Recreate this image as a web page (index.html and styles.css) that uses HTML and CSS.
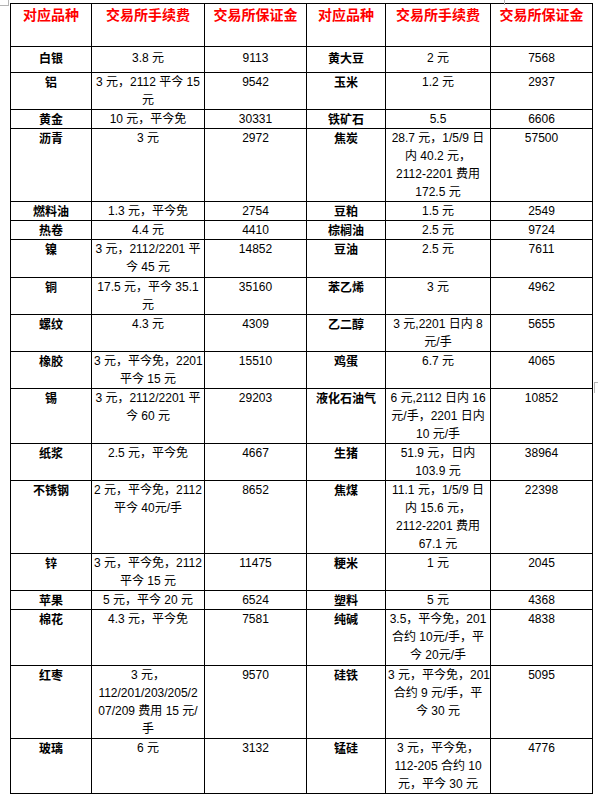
FILE: index.html
```html
<!DOCTYPE html>
<html lang="zh">
<head>
<meta charset="utf-8">
<title>交易所手续费与保证金</title>
<link rel="stylesheet" href="styles.css">
</head>
<body>
<div class="mark mark-tl"></div>
<div class="mark mark-top"></div>
<div class="mark mark-right"></div>
<table class="fees">
<colgroup>
<col class="c-name"><col class="c-fee"><col class="c-margin">
<col class="c-name2"><col class="c-fee2"><col class="c-margin2">
</colgroup>
<thead>
<tr class="head">
<th>对应品种</th><th>交易所手续费</th><th>交易所保证金</th>
<th>对应品种</th><th>交易所手续费</th><th>交易所保证金</th>
</tr>
</thead>
<tbody>
<tr class="r-first">
<td class="name">白银</td><td>3.8 元</td><td>9113</td>
<td class="name">黄大豆</td><td>2 元</td><td>7568</td>
</tr>
<tr>
<td class="name">铝</td><td>3 元，2112 平今 15<br>元</td><td>9542</td>
<td class="name">玉米</td><td>1.2 元</td><td>2937</td>
</tr>
<tr>
<td class="name">黄金</td><td>10 元，平今免</td><td>30331</td>
<td class="name">铁矿石</td><td>5.5</td><td>6606</td>
</tr>
<tr>
<td class="name">沥青</td><td>3 元</td><td>2972</td>
<td class="name">焦炭</td><td>28.7 元，1/5/9 日<br>内 40.2 元，<br>2112-2201 费用<br>172.5 元</td><td>57500</td>
</tr>
<tr>
<td class="name">燃料油</td><td>1.3 元，平今免</td><td>2754</td>
<td class="name">豆粕</td><td>1.5 元</td><td>2549</td>
</tr>
<tr>
<td class="name">热卷</td><td>4.4 元</td><td>4410</td>
<td class="name">棕榈油</td><td>2.5 元</td><td>9724</td>
</tr>
<tr>
<td class="name">镍</td><td>3 元，2112/2201 平<br>今 45 元</td><td>14852</td>
<td class="name">豆油</td><td>2.5 元</td><td>7611</td>
</tr>
<tr>
<td class="name">铜</td><td>17.5 元，平今 35.1<br>元</td><td>35160</td>
<td class="name">苯乙烯</td><td>3 元</td><td>4962</td>
</tr>
<tr>
<td class="name">螺纹</td><td>4.3 元</td><td>4309</td>
<td class="name">乙二醇</td><td>3 元,2201 日内 8<br>元/手</td><td>5655</td>
</tr>
<tr>
<td class="name">橡胶</td><td>3 元，平今免，2201<br>平今 15 元</td><td>15510</td>
<td class="name">鸡蛋</td><td>6.7 元</td><td>4065</td>
</tr>
<tr>
<td class="name">锡</td><td>3 元，2112/2201 平<br>今 60 元</td><td>29203</td>
<td class="name">液化石油气</td><td>6 元,2112 日内 16<br>元/手，2201 日内<br>10 元/手</td><td>10852</td>
</tr>
<tr>
<td class="name">纸浆</td><td>2.5 元，平今免</td><td>4667</td>
<td class="name">生猪</td><td>51.9 元，日内<br>103.9 元</td><td>38964</td>
</tr>
<tr>
<td class="name">不锈钢</td><td>2 元，平今免，2112<br>平今 40元/手</td><td>8652</td>
<td class="name">焦煤</td><td>11.1 元，1/5/9 日<br>内 15.6 元，<br>2112-2201 费用<br>67.1 元</td><td>22398</td>
</tr>
<tr>
<td class="name">锌</td><td>3 元，平今免，2112<br>平今 15 元</td><td>11475</td>
<td class="name">粳米</td><td>1 元</td><td>2045</td>
</tr>
<tr>
<td class="name">苹果</td><td>5 元，平今 20 元</td><td>6524</td>
<td class="name">塑料</td><td>5 元</td><td>4368</td>
</tr>
<tr>
<td class="name">棉花</td><td>4.3 元，平今免</td><td>7581</td>
<td class="name">纯碱</td><td>3.5，平今免，201<br>合约 10元/手，平<br>今 20元/手</td><td>4838</td>
</tr>
<tr>
<td class="name">红枣</td><td>3 元，<br>112/201/203/205/2<br>07/209 费用 15 元/<br>手</td><td>9570</td>
<td class="name">硅铁</td><td>3 元，平今免，201<br>合约 9 元/手，平<br>今 30 元</td><td>5095</td>
</tr>
<tr>
<td class="name">玻璃</td><td>6 元</td><td>3132</td>
<td class="name">锰硅</td><td>3 元，平今免，<br>112-205 合约 10<br>元，平今 30 元</td><td>4776</td>
</tr>
</tbody>
</table>
</body>
</html>
```

FILE: styles.css
```css
html, body {
  background: #ffffff;
}

body {
  margin: 3px 0 0 10px;
  font-family: "Liberation Sans", "Noto Sans CJK SC", sans-serif;
  font-size: 12px;
  color: #000000;
}

.fees {
  border-collapse: collapse;
  table-layout: fixed;
  width: 583px;
}

.c-name { width: 81px; }
.c-fee { width: 113px; }
.c-margin { width: 102px; }
.c-name2 { width: 79px; }
.c-fee2 { width: 105px; }
.c-margin2 { width: 102px; }

.fees th,
.fees td {
  border: 1px solid #000000;
  padding: 0 2px;
  vertical-align: top;
  text-align: center;
  line-height: 18.05px;
  white-space: nowrap;
  overflow: hidden;
}

.head th {
  color: #ff0000;
  font-family: "Noto Sans CJK SC", sans-serif;
  font-size: 14px;
  font-weight: 700;
  line-height: 21px;
  height: 42px;
  padding-top: 0;
}

.fees td.name {
  font-family: "Noto Sans CJK SC", sans-serif;
  font-weight: 700;
}

.r-first td {
  height: 23px;
  padding-top: 2px;
}

.mark {
  position: absolute;
  border-color: #b4b4b4;
  border-style: solid;
  border-width: 0;
}

.mark-tl {
  left: 0;
  top: 0;
  width: 8px;
  height: 5px;
  border-right-width: 1px;
  border-bottom-width: 1px;
}

.mark-top {
  left: 504px;
  top: 0;
  width: 0;
  height: 5px;
  border-left-width: 1px;
}

.mark-right {
  left: 594px;
  top: 382px;
  width: 6px;
  height: 10px;
  border-left-width: 1px;
  border-top-width: 1px;
}
```
